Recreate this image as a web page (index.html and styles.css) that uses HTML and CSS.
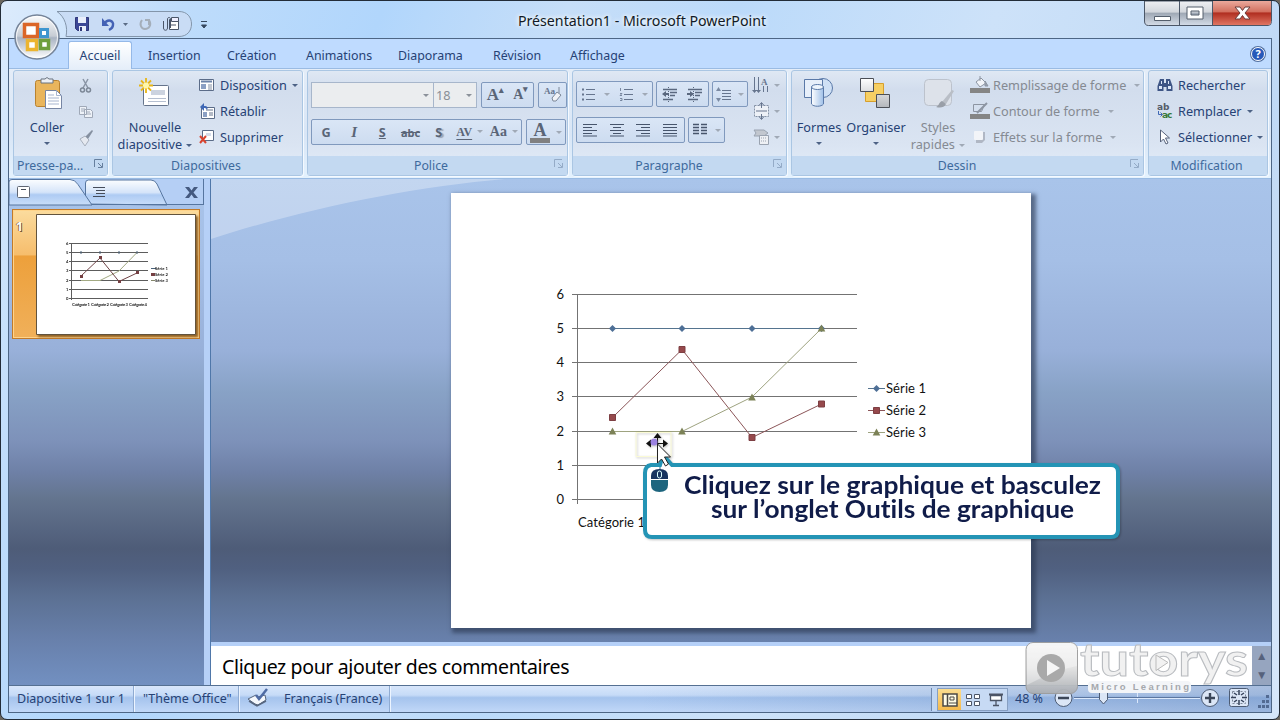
FILE: index.html
```html
<!DOCTYPE html>
<html lang="fr">
<head>
	<meta charset="UTF-8">
	<title>Présentation1 - Microsoft PowerPoint</title>
	<link rel="stylesheet" href="styles.css">
</head>
<body>
	<div class="window">
		<div class="titlebar">
			<div class="quick">
				<svg class="quick-icons" width="160" height="30" viewBox="50 8 160 30">
					<path d="M57 11.500H179C187 11.500 191.500 17 191.500 24S187 36.500 179 36.500H66C68 27 65 17 57 11.500z" fill="#c9dcf5" stroke="#8395aa"/>
					<path d="M75.500 17.500h13v13h-11l-2-2z" fill="#3c4796" stroke="#303879"/><path d="M78 17h8v6h-8zM79 26h7v5h-7z" fill="#e9eefb"/><path d="M80 27h2v4h-2z" fill="#303879"/>
					<path d="M104 24c4-6 10-3 9 1 0 3-2 4-4 5" fill="none" stroke="#4462b5" stroke-width="2.400"/><path d="M102 18v8h7z" fill="#4462b5"/>
					<path d="M123 23h5l-2.500 3z" fill="#5a6b84"/>
					<path d="M142 20c-3 4-1 9 3 9s7-4 4-9M145 20h4v5" fill="none" stroke="#a4aeba" stroke-width="2"/>
					<path d="M169.500 19.500h9v10h-9z" fill="#fff" stroke="#4a5568"/><path d="M171.500 17.500h7v4h-7zM171 25h5" fill="#eef" stroke="#4a5568"/><path d="M163.500 21v7c0 3 4 3 4 0v-9c0-2 3-2 3 0v9" fill="none" stroke="#4a5568"/>
					<path d="M201 21.500h6M201.500 25h5l-2.500 3z" stroke="#35475e" fill="#35475e"/>
				</svg>
			</div>
			<div class="caption">Présentation1 - Microsoft PowerPoint</div>
			<div class="controls">
				<svg width="130" height="26" viewBox="1143 0 130 26">
					<defs>
						<linearGradient id="glass" x2="0" y2="1"><stop offset="0" stop-color="#eef0f3"/><stop offset=".45" stop-color="#d2d6dc"/><stop offset=".5" stop-color="#9fa8b5"/><stop offset="1" stop-color="#d5dde8"/></linearGradient>
						<linearGradient id="red" x2="0" y2="1"><stop offset="0" stop-color="#eba99c"/><stop offset=".45" stop-color="#d2705f"/><stop offset=".5" stop-color="#b02e20"/><stop offset="1" stop-color="#e07562"/></linearGradient>
					</defs>
					<path d="M1144.500 0V20q0 4.500 4 4.500H1268q3.500 0 3.500-4V0z" fill="url(#glass)" stroke="#4b5667"/>
					<path d="M1213 0v24h55q3 0 3-4V0z" fill="url(#red)"/>
					<path d="M1179.500 0v24M1212.500 0v24" stroke="#4b5667"/>
					<path d="M1154.500 15.500h16v4h-16z" fill="#fff" stroke="#545e6c"/>
					<path fill-rule="evenodd" d="M1187 6h16v12h-16zM1191 10v4h8v-4z" fill="#fff" stroke="#545e6c"/>
					<path d="M1235 6h5l2.500 3.500L1245 6h5l-5 6 5 6h-5l-2.500-3.500L1240 18h-5l5-6z" fill="#fff" stroke="#6b3c3b"/>
				</svg>
			</div>
		</div>

		<div class="client">
			<div class="tabs">
				<a class="tab active">Accueil</a>
				<a class="tab t2">Insertion</a>
				<a class="tab t3">Création</a>
				<a class="tab t4">Animations</a>
				<a class="tab t5">Diaporama</a>
				<a class="tab t6">Révision</a>
				<a class="tab t7">Affichage</a>
				<span class="help">?</span>
			</div>

			<div class="ribbon">
				<div class="group g-clip">
					<div class="body">
						<div class="big">
							<svg width="40" height="36" viewBox="0 0 40 36"><rect x="8.500" y="4.500" width="24" height="26" rx="2" fill="#e9b55c" stroke="#b9822f"/><path d="M14 7V3h4q2-3 4 0h4v4z" fill="#eceff4" stroke="#69727f"/><path d="M18.500 14.500h11l5 5v13h-16z" fill="#fff" stroke="#7786a4"/><path d="M29.500 14.500v5h5M21 19h6M21 22h11M21 25h11M21 28h11" fill="none" stroke="#a7b5cf"/></svg>
							<span>Coller</span><i class="arrow"></i>
						</div>
						<div class="smalls icons">
							<svg width="18" height="18" viewBox="0 0 18 18"><path d="M6 2l5 9M11 2L6 11" stroke="#8a95a5" stroke-width="1.500"/><circle cx="5.500" cy="13" r="2" fill="none" stroke="#7d8897" stroke-width="1.500"/><circle cx="11.500" cy="13" r="2" fill="none" stroke="#7d8897" stroke-width="1.500"/></svg>
							<svg width="18" height="18" viewBox="0 0 18 18"><path d="M2.500 3.500h7v8h-7zM7.500 6.500h6l2 2v6h-8z" fill="#eef2f8" stroke="#a0a9b8"/><path d="M4 6h4M4 8h3M9 9h4M9 11h5" stroke="#a0a9b8"/></svg>
							<svg width="18" height="18" viewBox="0 0 18 18"><path d="M15 1l1 1-5 8-3-2z" fill="#8590a0"/><path d="M3 10l5-3 4 4-4 6z" fill="#e5e9f0" stroke="#a7afbc"/></svg>
						</div>
					</div>
					<div class="label"><span>Presse-pa...</span><svg class="launcher" width="10" height="10" viewBox="0 0 10 10"><path d="M.5 8V.5H8M4 4l4 4M8.500 4v4.500H4" fill="none" stroke="#667f9e"/></svg></div>
				</div>

				<div class="group g-slides">
					<div class="body">
						<div class="big">
							<svg width="40" height="36" viewBox="0 0 40 36"><rect x="8.500" y="9.500" width="25" height="20" rx="1" fill="#fff" stroke="#65748c"/><path d="M16 14h14v5H16z" fill="#ccd3df"/><path d="M13 22.500h18M13 25.500h18" stroke="#b5bfd0"/><path d="M11 2v15M4 9.500h14M6 4.500l10 10M16 4.500l-10 10" stroke="#e8b616" stroke-width="1.800"/><circle cx="11" cy="9.500" r="3" fill="#fff7a8"/></svg>
							<span>Nouvelle</span><span>diapositive <i class="arrow"></i></span>
						</div>
						<div class="smalls">
							<div class="cmd"><svg width="16" height="16" viewBox="0 0 16 16"><path d="M.5 2.500h14v11H.5z" fill="#fff" stroke="#5b6c88"/><path d="M2 4.500h11" stroke="#6b82a8" stroke-width="2"/><path d="M2 7h5v5H2z" fill="#8ba0c4"/><path d="M9 8h4M9 10h4M9 12h4" stroke="#8390a5"/></svg>Disposition<i class="arrow"></i></div>
							<div class="cmd"><svg width="16" height="16" viewBox="0 0 16 16"><path d="M2.500 4.500h13v11h-13z" fill="#fff" stroke="#5b6c88"/><path d="M4 9h4v5H4z" fill="#8ba0c4"/><path d="M7 7h7M10 10h4M10 12h4" stroke="#66748c"/><path d="M1 4l4-4v3c4 0 4 2 3 4-1-2-2-2-3-2v3z" fill="#3f68b5"/></svg>Rétablir</div>
							<div class="cmd"><svg width="16" height="16" viewBox="0 0 16 16"><path d="M3.500 1.500h11v10h-11z" fill="#fff" stroke="#5b6c88"/><path d="M7 4h5v3H7z" fill="#d5dcea"/><path d="M1 7l6 7M7 7l-6 7" stroke="#d8432f" stroke-width="2"/></svg>Supprimer</div>
						</div>
					</div>
					<div class="label"><span>Diapositives</span></div>
				</div>

				<div class="group g-font">
					<div class="body rows">
						<div class="row">
							<div class="combo c-font"><i class="arrow"></i></div>
							<div class="combo c-size">18<i class="arrow"></i></div>
							<div class="box w52"><b class="serif">A<sup>▴</sup></b><b class="serif sm">A<sup>▾</sup></b></div>
							<div class="box w28"><svg width="20" height="18" viewBox="0 0 20 18"><text x="1" y="8" class="tiny">Aa</text><path d="M16 1v6M9 12l5-6 4 3-5 6h-3z" fill="#f1f3f7" stroke="#7c8899"/></svg></div>
						</div>
						<div class="row r2">
							<div class="box w211">
								<b>G</b><em>I</em><b><u>S</u></b><b class="strike">abc</b><b class="shadow">S</b><span class="av serif"><u>AV</u><i class="arrow"></i></span><span class="aa serif">Aa<i class="arrow"></i></span>
							</div>
							<div class="box w40"><span class="serif fontcolor">A</span><i class="arrow"></i></div>
						</div>
					</div>
					<div class="label"><span>Police</span><svg class="launcher off" width="10" height="10" viewBox="0 0 10 10"><path d="M.5 8V.5H8M4 4l4 4M8.500 4v4.500H4" fill="none" stroke="#667f9e"/></svg></div>
				</div>

				<div class="group g-para">
					<div class="body">
						<div class="rows">
							<div class="row">
								<div class="box w77">
									<svg width="15" height="15" viewBox="0 0 15 15"><path d="M5 2.500h9M5 7.500h9M5 12.500h9" stroke="#66758e"/><path d="M1 2.500h2M1 7.500h2M1 12.500h2" stroke="#66758e" stroke-width="2"/></svg><i class="arrow"></i>
									<svg width="15" height="15" viewBox="0 0 15 15"><path d="M5 2.500h9M5 7.500h9M5 12.500h9" stroke="#66758e"/><path d="M1.500 1v3M1 6.500h2l-2 2h2M1 11.500h2v2H1" fill="none" stroke="#66758e" stroke-width=".8"/></svg><i class="arrow"></i>
								</div>
								<div class="box w53">
									<svg width="16" height="15" viewBox="0 0 16 15"><path d="M1 2.500h14M8 5.500h7M8 8.500h5M1 12.500h10" stroke="#5a687f" stroke-width="1.500"/><path d="M0 7l4-3v2h3v2H4v2z" fill="#5a687f"/><path d="M6.500 0v15" stroke="#5a687f" stroke-dasharray="1 1"/></svg>
									<svg width="16" height="15" viewBox="0 0 16 15"><path d="M1 2.500h14M8 5.500h7M8 8.500h5M1 12.500h10" stroke="#5a687f" stroke-width="1.500"/><path d="M7 7L3 4v2H0v2h3v2z" fill="#5a687f"/><path d="M6.500 0v15" stroke="#5a687f" stroke-dasharray="1 1"/></svg>
								</div>
								<div class="box w36"><svg width="16" height="15" viewBox="0 0 16 15"><path d="M6 3.500h9M6 6.500h9M6 9.500h9M6 12.500h9" stroke="#66758e"/><path d="M2.500 0L5 4H0zM2.500 15L5 11H0z" fill="#7b8aa2"/></svg><i class="arrow"></i></div>
							</div>
							<div class="row r2">
								<div class="box w109">
									<svg width="15" height="14" viewBox="0 0 15 14"><path d="M0 1.500h14M0 4.500h9M0 7.500h14M0 10.500h9M0 13h14" stroke="#47556c"/></svg>
									<svg width="15" height="14" viewBox="0 0 15 14"><path d="M0 1.500h14M3 4.500h8M0 7.500h14M3 10.500h8M0 13h14" stroke="#47556c"/></svg>
									<svg width="15" height="14" viewBox="0 0 15 14"><path d="M0 1.500h14M5 4.500h9M0 7.500h14M5 10.500h9M0 13h14" stroke="#47556c"/></svg>
									<svg width="15" height="14" viewBox="0 0 15 14"><path d="M0 1.500h14M0 4.500h14M0 7.500h14M0 10.500h14M0 13h14" stroke="#47556c"/></svg>
								</div>
								<div class="box w37"><svg width="15" height="14" viewBox="0 0 15 14"><path d="M0 1.500h6M8 1.500h6M0 4.500h6M8 4.500h6M0 7.500h6M8 7.500h6M0 10.500h6M8 10.500h6" stroke="#47556c" stroke-width="1.300"/></svg><i class="arrow"></i></div>
							</div>
						</div>
						<div class="smalls faded">
							<div class="cmd"><svg width="18" height="18" viewBox="0 0 18 18"><path d="M2.500 1v15M6.500 1v15M11.500 10v6M15.500 10v6" stroke="#66758e"/><path d="M0 14h5l-2.500 3zM4 14h5l-2.500 3z" fill="#66758e"/><text x="9" y="9" class="tiny">A</text></svg><i class="arrow"></i></div>
							<div class="cmd"><svg width="18" height="18" viewBox="0 0 18 18"><path d="M2.500 3.500h14v11h-14z" fill="#edf1f7" stroke="#8592a6" stroke-dasharray="2 1"/><path d="M9.500 1v5M9.500 12v5M7 3.500l2.500-3 2.500 3M7 14.500l2.500 3 2.500-3M4 9h11" stroke="#66758e" fill="none"/></svg><i class="arrow"></i></div>
							<div class="cmd"><svg width="18" height="18" viewBox="0 0 18 18"><path d="M2 2h10l4 3-4 3H2l2-3z" fill="#c2c7cf" stroke="#9aa3b0"/><path d="M7.500 7.500h9v9h-9z" fill="#eef0f4" stroke="#9aa3b0"/><path d="M9 10h6M9 13h6" stroke="#9aa3b0" stroke-dasharray="1 1"/></svg><i class="arrow"></i></div>
						</div>
					</div>
					<div class="label"><span>Paragraphe</span><svg class="launcher off" width="10" height="10" viewBox="0 0 10 10"><path d="M.5 8V.5H8M4 4l4 4M8.500 4v4.500H4" fill="none" stroke="#667f9e"/></svg></div>
				</div>

				<div class="group g-draw">
					<div class="body">
						<div class="big b-shapes">
							<svg width="40" height="36" viewBox="0 0 40 36"><defs><linearGradient id="cyl"><stop offset="0" stop-color="#fff"/><stop offset="1" stop-color="#9fc0e8"/></linearGradient></defs><circle cx="24" cy="12" r="9.500" fill="#cfe0f5" stroke="#5a79a8"/><path d="M5.500 3.500h18v18h-18z" fill="#e7effa" stroke="#5a79a8"/><path d="M12.500 11v17c2 3 10 3 12 0V11z" fill="url(#cyl)" stroke="#5a79a8"/><ellipse cx="18.500" cy="11" rx="6" ry="2.500" fill="#eef5fd" stroke="#5a79a8"/></svg>
							<span>Formes</span><i class="arrow"></i>
						</div>
						<div class="big b-org">
							<svg width="40" height="36" viewBox="0 0 40 36"><defs><linearGradient id="sq" x2="0" y2="1"><stop offset="0" stop-color="#fff"/><stop offset="1" stop-color="#b4b7bc"/></linearGradient></defs><path d="M9.500 7.500h18v18h-18z" fill="#f6cf63" stroke="#d79f2c"/><path d="M4.500 2.500h13v13h-13zM20.500 18.500h13v13h-13z" fill="url(#sq)" stroke="#4b4f57"/></svg>
							<span>Organiser</span><i class="arrow"></i>
						</div>
						<div class="big b-styles off">
							<svg width="40" height="36" viewBox="0 0 40 36"><rect x="6.500" y="3.500" width="27" height="26" rx="4" fill="#dde2ea" stroke="#bcc2cc"/><path d="M34 14l2 1-8 13-4-2z" fill="#b9bec6"/><path d="M24 25l4 3c-2 4-6 4-10 3 3-1 3-5 6-6z" fill="#999fa8"/></svg>
							<span>Styles</span><span>rapides <i class="arrow"></i></span>
						</div>
						<div class="smalls off">
							<div class="cmd"><svg width="20" height="18" viewBox="0 0 20 18"><path d="M6 6l5-4 5 5-6 4z" fill="#f2f4f8" stroke="#8d95a2"/><path d="M15 5l3 5-3 0zM10 0v5" fill="#9aa2af" stroke="#8d95a2"/><path d="M0 12h20v5H0z" fill="#858585"/></svg>Remplissage de forme<i class="arrow"></i></div>
							<div class="cmd"><svg width="20" height="18" viewBox="0 0 20 18"><path d="M3.500 2.500h11l-3 7h-8z" fill="none" stroke="#8d95a2"/><path d="M17 1L9 9l-2 2" stroke="#8d95a2" stroke-width="2"/><path d="M0 12h20v5H0z" fill="#858585"/></svg>Contour de forme<i class="arrow"></i></div>
							<div class="cmd"><svg width="20" height="18" viewBox="0 0 20 18"><path d="M6 6l3-2h6v8l-3 3H6z" fill="#b0b7c4"/><rect x="4" y="3" width="9" height="9" rx="1" fill="#f2f4f8"/></svg>Effets sur la forme<i class="arrow"></i></div>
						</div>
					</div>
					<div class="label"><span>Dessin</span><svg class="launcher off" width="10" height="10" viewBox="0 0 10 10"><path d="M.5 8V.5H8M4 4l4 4M8.500 4v4.500H4" fill="none" stroke="#667f9e"/></svg></div>
				</div>

				<div class="group g-edit">
					<div class="body">
						<div class="smalls">
							<div class="cmd"><svg width="16" height="16" viewBox="0 0 16 16"><path d="M3 2h4v4h2V2h4l2.500 7v5h-6v-4h-3v4h-6V9z" fill="#3e5585"/><path d="M2 9h3v3H2zM11 9h3v3h-3zM4 4h1v3H4zM11 4h1v3h-1z" fill="#dbe6f7"/></svg>Rechercher</div>
							<div class="cmd"><svg width="16" height="16" viewBox="0 0 16 16"><text x="0" y="7" class="ab">ab</text><text x="5" y="15" class="ac">ac</text><path d="M1.500 8v3.500H5M3.500 9.500l2 2-2 2" fill="none" stroke="#3f68b5"/></svg>Remplacer<i class="arrow"></i></div>
							<div class="cmd"><svg width="16" height="16" viewBox="0 0 16 16"><path d="M3.500 1v12l3-3 2.500 5 2-1-2.500-5h4z" fill="#fff" stroke="#56627a"/></svg>Sélectionner<i class="arrow"></i></div>
						</div>
					</div>
					<div class="label"><span>Modification</span></div>
				</div>
			</div>

			<div class="workspace">
				<div class="outline">
					<svg class="pane-tabs" width="195" height="27" viewBox="9 180 195 27">
						<defs><linearGradient id="pt" x2="0" y2="1"><stop offset="0" stop-color="#fbfdff"/><stop offset=".5" stop-color="#d5e4f9"/><stop offset=".6" stop-color="#aecbf3"/><stop offset="1" stop-color="#c9defa"/></linearGradient></defs>
						<path d="M9 180h195v26H9z" fill="#b5cff5"/>
						<path d="M85.500 205V184q0-3 3-3H151q4 0 6 4l10 21z" fill="url(#pt)" stroke="#56759f"/>
						<path d="M9 206V183q0-2.500 3-2.500H70q5 0 8 5l14 20.500z" fill="url(#pt)" stroke="#56759f"/>
						<path d="M92 205.500H204M203.500 180v26" stroke="#56759f"/>
						<rect x="17.500" y="187.500" width="12" height="11" rx="1" fill="#fff" stroke="#5f6673"/><path d="M21 190.500h5M93 188.500h12M96 191.500h9M96 194.500h9M93 197.500h12" stroke="#464d5a"/>
						<path d="M185 188h4l2.500 3.500 2.500-3.500h4l-4.500 5.500 4.500 5.500h-4l-2.500-3.500-2.500 3.500h-4l4.500-5.500z" fill="#455a80"/>
					</svg>
					<div class="thumb">
						<span class="num">1</span>
						<svg width="160" height="121" viewBox="36 214 160 121">
							<path d="M36.500 214.500h159v120h-159z" fill="#fff" stroke="#62533d"/>
							<path d="M69 243.500h79M69 252.500h79M69 261.500h79M69 270.500h79M69 280.500h79M69 289.500h79M69 298.500h79M71.500 243v57" stroke="#5c5c5c"/>
							<path d="M81 280.500h19l19-9.500 18-18.500" fill="none" stroke="#a3aa83"/>
							<path d="M81 276l19-18 19 23.500 19-9" fill="none" stroke="#704447"/>
							<path d="M81 251v3M100 251v3M119 251v3M137 251v3" stroke="#496078"/><path d="M151 268.500h5" stroke="#496078"/><path d="M80 275h3v3h-3zM99 256h3v3h-3zM118 280h3v3h-3zM136 271h3v3h-3zM151 273h4v3h-4z" fill="#743f42"/><path d="M151 280.500h4" stroke="#84866b"/>
							<g class="mini"><text x="66" y="245">6</text><text x="66" y="254">5</text><text x="66" y="263">4</text><text x="66" y="272">3</text><text x="66" y="282">2</text><text x="66" y="291">1</text><text x="66" y="300">0</text><text x="155" y="270">Série 1</text><text x="155" y="276">Série 2</text><text x="155" y="282">Série 3</text><text x="72" y="306" textLength="18">Catégorie 1</text><text x="91" y="306" textLength="18">Catégorie 2</text><text x="110" y="306" textLength="18">Catégorie 3</text><text x="129" y="306" textLength="18">Catégorie 4</text></g>
						</svg>
					</div>
				</div>
				<div class="main">
					<div class="stage">
						<svg class="wave" width="300" height="62" viewBox="211 179 300 62"><path d="M211 179H505C410 187 300 210 211 239z" fill="#fff" opacity=".3"/></svg>
						<div class="slide">
							<svg width="580" height="435" viewBox="451 193 580 435">
								<path d="M572 294.500h285M572 328.500h285M572 362.500h285M572 396.500h285M572 431.500h285M572 465.500h285M572 499.500h285M577.500 294v210" stroke="#737373" shape-rendering="crispEdges"/>
								<path d="M612.500 328.500H821.500" stroke="#55748f"/>
								<path d="M612.500 417.500L682 349.500 752 437.500 821.500 404" fill="none" stroke="#8b5558"/>
								<path d="M612.500 431.500H682L752 397 821.500 328.500" fill="none" stroke="#9ea380"/>
								<path d="M868 388.500h17" stroke="#55748f"/><path d="M868 410.500h17" stroke="#8b5558"/><path d="M868 432.500h17" stroke="#9ea380"/>
								<g fill="#4e6f96"><path id="dia" d="M612.500 325l3.500 3.500-3.500 3.500-3.500-3.500z"/><use href="#dia" x="69.500"/><use href="#dia" x="139.500"/><use href="#dia" x="209"/><use href="#dia" x="264" y="60"/></g>
								<g fill="#96494c" stroke="#7d3f43"><path id="squ" d="M609.500 414.500h6v6h-6z"/><use href="#squ" x="69.500" y="-68"/><use href="#squ" x="139.500" y="20"/><use href="#squ" x="209" y="-13.500"/><use href="#squ" x="264" y="-7"/></g>
								<g fill="#7c8257"><path id="tri" d="M612.500 427.500l3.800 7h-7.600z"/><use href="#tri" x="69.500"/><use href="#tri" x="139.500" y="-34"/><use href="#tri" x="209" y="-103"/><use href="#tri" x="264" y="1"/></g>
								<g class="chart-text">
									<text x="556.500" y="299">6</text><text x="556.500" y="333">5</text><text x="556.500" y="367">4</text><text x="556.500" y="401">3</text><text x="556.500" y="436">2</text><text x="556.500" y="470">1</text><text x="556.500" y="504">0</text>
									<text x="886" y="393" textLength="40">Série 1</text><text x="886" y="415" textLength="40">Série 2</text><text x="886" y="437" textLength="40">Série 3</text>
									<text x="578" y="527" textLength="67">Catégorie 1</text>
								</g>
							</svg>
						</div>
					</div>
					<div class="notes">
						<p>Cliquez pour ajouter des commentaires</p>
						<div class="scroll"><i>▲</i><i>▼</i></div>
					</div>
				</div>
			</div>

			<div class="status">
				<span class="cell s1">Diapositive 1 sur 1</span>
				<span class="cell s2">"Thème Office"</span>
				<span class="cell s3"><svg width="22" height="20" viewBox="0 0 22 20"><path d="M1 11l8-4 2 2 7-2 1 5-8 5-3-1z" fill="#f4f7fc" stroke="#56657e"/><path d="M2 13l8 5 9-5" fill="none" stroke="#56657e" stroke-width="1.500"/><path d="M9 7l3 4 8-10" fill="none" stroke="#4f6ba4" stroke-width="2.500"/></svg></span>
				<span class="cell s4">Français (France)</span>
				<div class="views">
					<span class="on"><svg width="16" height="14" viewBox="0 0 16 14"><path d="M1 1h14v12H1zM5.500 1v12" fill="#fffbe5" stroke="#4c4a45" stroke-width="1.500"/><path d="M8 4h4v3H8zM7 10h8" fill="none" stroke="#4c4a45"/></svg></span>
					<span><svg width="16" height="14" viewBox="0 0 16 14"><path d="M1.500 1.500h5v4h-5zM9.500 1.500h5v4h-5zM1.500 8.500h5v4h-5zM9.500 8.500h5v4h-5z" fill="#fff" stroke="#4c5566"/></svg></span>
					<span><svg width="16" height="14" viewBox="0 0 16 14"><path d="M1 1.500h14" stroke="#4c5566" stroke-width="2"/><path d="M2.500 2.500h11v5h-11zM8 8v4M5 12.500h6" fill="#fff" stroke="#4c5566" stroke-width="1.300"/></svg></span>
				</div>
				<span class="zoom">48 %</span>
				<svg class="slider" width="218" height="24" viewBox="1053 687 218 24">
					<path d="M1074 698.500h126M1137.500 692v11" stroke="#dbe8fb"/><path d="M1074 697.500h126" stroke="#5b76a0"/>
					<g fill="#dbe6f6" stroke="#4d5c74"><circle cx="1063.500" cy="698" r="8.500"/><circle cx="1210" cy="698" r="8.500"/><path d="M1099.500 692.500h8v7l-4 4.500-4-4.500z"/><rect x="1229.500" y="688.500" width="19" height="18" rx="2"/></g>
					<path d="M1058 698h11M1205 698h10M1210 693v10" stroke="#3b4658" stroke-width="2.400"/>
					<path d="M1232.500 691.500h13v12h-13z" fill="none" stroke="#7b8798" stroke-dasharray="2 2"/><path d="M1239 690v5M1239 700v5M1231 697.500h5M1242 697.500h5M1234 693l3 2M1244 693l-3 2M1234 702l3-2M1244 702l-3-2" stroke="#35415a" stroke-width="1.500"/>
					<path d="M1266 695h3v3h-3zM1262 700h3v3h-3zM1266 700h3v3h-3zM1258 705h3v3h-3zM1262 705h3v3h-3zM1266 705h3v3h-3z" fill="#526a92"/>
				</svg>
			</div>
		</div>
	</div>

	<svg class="orb" width="48" height="48" viewBox="0 0 48 48">
		<defs><linearGradient id="og" x2="0" y2="1"><stop offset="0" stop-color="#fdfdfd"/><stop offset=".48" stop-color="#c6ccd4"/><stop offset=".52" stop-color="#a9b3c2"/><stop offset="1" stop-color="#fff"/></linearGradient></defs>
		<circle cx="24" cy="24" r="22" fill="url(#og)" stroke="#76859a" stroke-width="1.500"/><circle cx="24" cy="24" r="20.500" fill="none" stroke="#fff" opacity=".8"/>
		<path d="M11.500 11.500h13v12h-13z" fill="#fff" stroke="#db6527" stroke-width="3.500"/><path d="M27.500 16.500h7v7h-7z" fill="#fff" stroke="#3f96cf" stroke-width="3"/><path d="M14.500 27.500h9v9h-9z" fill="#fff" stroke="#ecb42f" stroke-width="3.500"/><path d="M27.500 27.500h8v8h-8z" fill="#fff" stroke="#6f9f3c" stroke-width="3.500"/>
	</svg>

	<div class="callout">
		<svg width="500" height="112" viewBox="630 430 500 112">
			<path d="M636 432.500h35v24h-35z" fill="none" stroke="#fbfbd6"/>
			<path d="M651 465q-6 1-6 8v57q0 7 7 7h459q7 0 7-7v-58q0-7-7-7H672l-9-10-3 10z" fill="#fff" stroke="#2494b5" stroke-width="4"/>
			<path d="M657.500 434v25M647 443.500h20" stroke="#111"/><path d="M657.500 433l4 5h-8zM646 443.500l5-4v8zM668 443.500l-5-4v8z" fill="#111"/>
			<circle cx="654" cy="442" r="3.500" fill="#9b82e0"/>
			<path d="M657.500 444v19l4-4 4 7 3-2-4-7h6z" fill="#fff" stroke="#222"/>
			<path d="M660 467v5" stroke="#28788f"/>
			<path d="M651 479v-3q0-7 8.500-7t8.500 7v3z" fill="#17335f"/><path d="M651 480h17v5q0 7-8.500 7t-8.500-7z" fill="#1d657e"/><rect x="657.500" y="471" width="4" height="7" rx="2" fill="#17335f" stroke="#dff"/>
			<g class="callout-text"><text x="684" y="494" textLength="417" lengthAdjust="spacingAndGlyphs">Cliquez sur le graphique et basculez</text><text x="711" y="518" textLength="363" lengthAdjust="spacingAndGlyphs">sur l’onglet Outils de graphique</text></g>
		</svg>
	</div>

	<svg class="watermark" width="230" height="56" viewBox="1022 640 230 56">
		<defs><linearGradient id="wm" x2="0" y2="1"><stop offset="0" stop-color="#f4f4f4"/><stop offset=".5" stop-color="#e2e2e2"/><stop offset="1" stop-color="#a9adb2"/></linearGradient></defs>
		<rect x="1026" y="642.500" width="51.500" height="51" rx="7" fill="url(#wm)" stroke="#9c9c9c" opacity=".95"/>
		<path d="M1027 650q0-7 7-7h35q8 0 8 7v16q-22 4-50 19z" fill="#fff" opacity=".35"/>
		<circle cx="1051" cy="668" r="14" fill="#a9a9a9"/><path d="M1047 660l13 8-13 8z" fill="#f5f5f5"/>
		<text x="1080" y="676" class="brand" textLength="168" lengthAdjust="spacingAndGlyphs">tutorys</text>
		<rect x="1088" y="681" width="103" height="12" rx="4" fill="#f3f5f8"/>
		<path d="M1156 655l12 7.500-12 8z" fill="#f2f2f2" stroke="#bbb"/>
		<text x="1091" y="690" class="tag" textLength="98">Micro Learning</text>
	</svg>
</body>
</html>
```
FILE: styles.css
```css
*{ margin: 0; padding: 0; box-sizing: border-box; }
body{ width: 1280px; height: 720px; overflow: hidden; background: #6b665e; font-family: "Noto Sans", sans-serif; font-size: 12.7px; color: #264275; }
svg{ display: block; flex: none; }
i{ font-style: normal; }

.window{ width: 1280px; height: 720px; padding: 0 7px 7px; border: 1px solid #222c38; border-radius: 7px; background: linear-gradient(110deg, #dcebfc 0, #bedcfb 12%, #b1d6fc 25%, #c6def8 37%, #bbdafa 48%, #cde2f9 65%, #c0d9f5 85%, #d6e7fa 100%); overflow: hidden; }

.titlebar{ height: 37px; display: flex; justify-content: space-between; }
.quick{ width: 320px; padding: 7px 0 0 42px; }
.caption{ padding: 10px 0 0 4px; font-size: 14.2px; line-height: 19px; color: #111a26; text-shadow: 0 0 5px #fff, 0 0 5px #fff; }
.controls{ width: 320px; display: flex; justify-content: flex-end; }
.controls svg{ margin-right: -1px; }

.client{ height: 675px; border: 1px solid #4d6685; background: #bfdbff; }
.tabs{ height: 29px; padding: 2px 5px 0 59px; display: flex; font-size: 12.4px; }
.tab{ height: 28px; line-height: 29px; white-space: nowrap; }
.tab.active{ width: 64px; margin-right: 16px; text-align: center; background: linear-gradient(#fff, #e5eef9); border: 1px solid #95b9e8; border-bottom: 0; border-radius: 3px 3px 0 0; line-height: 27px; position: relative; z-index: 2; }
.t2{ width: 79px; }
.t3{ width: 79px; }
.t4{ width: 92px; }
.t5{ width: 95px; }
.t6{ width: 77px; }
.help{ width: 14px; height: 14px; margin: 6px 1px 0 auto; border-radius: 50%; border: 1px solid #fff; box-shadow: 0 0 0 1px #5370a0; background: #2759b9; color: #fff; font-weight: bold; font-size: 11px; line-height: 12px; text-align: center; }

.ribbon{ height: 111px; padding: 1px 2px 0 4px; display: flex; gap: 4px; background: linear-gradient(#e4edf8, #d9e6f6 60%, #e4f2fe); border: solid #9abbe3; border-width: 1px 0; }
.group{ height: 106px; display: flex; flex-direction: column; border: 1px solid #aac6e3; border-radius: 3px; background: linear-gradient(#dfe8f4, #d2dded 18%, #dae4f2 70%, #e3edf9); box-shadow: 1px 1px 0 #f4f9ff; }
.g-clip{ width: 95px; }
.g-slides{ width: 191px; }
.g-font{ width: 261px; }
.g-para{ width: 215px; }
.g-draw{ width: 353px; }
.g-edit{ width: 120px; }
.body{ height: 85px; padding-top: 1px; display: flex; }
.label{ height: 19px; background: #c3d9f1; color: #3e6a9d; display: flex; align-items: center; font-size: 12.3px; line-height: 19px; padding-right: 3px; }
.label span{ flex: 1; text-align: center; }
.g-para .label span, .g-draw .label span{ padding-right: 8px; }
.launcher{ margin-bottom: 4px; }
.launcher.off{ opacity: .5; }

.arrow{ display: inline-block; width: 0; height: 0; border: solid transparent; border-width: 3px 3px 0; border-top-color: #4d6285; flex: none; }
.off{ color: #858a92; }
.off .arrow, .box .arrow, .faded .arrow{ border-top-color: #a0a9b6; }
.combo .arrow{ border-top-color: #8b919a; }

.big{ display: flex; flex-direction: column; align-items: center; line-height: 17px; padding-top: 4px; white-space: nowrap; }
.big svg{ margin-bottom: 7px; }
.big > span{ height: 17px; }
.big > span .arrow{ vertical-align: middle; margin-left: 1px; }
.big > .arrow{ margin-top: 6px; }
.g-clip .big{ width: 66px; }
.g-clip .label span{ text-align: left; padding-left: 3px; }
.g-slides .big{ width: 84px; }
.b-shapes{ width: 54px; }
.b-org{ width: 60px; }
.b-styles{ width: 64px; }

.smalls{ display: flex; flex-direction: column; }
.cmd{ height: 26px; display: flex; align-items: center; gap: 5px; white-space: nowrap; }
.smalls.icons{ gap: 8px; padding-top: 5px; margin-left: -3px; }
.g-slides .smalls{ padding-left: 2px; }
.g-edit .smalls{ padding-left: 8px; }
.g-draw .cmd{ gap: 3px; }
.g-draw .cmd .arrow{ margin-left: 5px; }
.g-para .smalls{ padding-left: 4px; }
.g-para .cmd{ gap: 4px; }

.rows{ display: block; padding-left: 3px; }
.body.rows{ padding-top: 0; }
.row{ display: flex; padding-top: 11px; gap: 4px; height: 37px; }
.g-para .row{ padding-top: 9px; height: 35px; gap: 3px; }
.g-para .r2{ height: 36px; padding-top: 10px; }
.box{ height: 26px; display: flex; align-items: center; justify-content: space-around; border: 1px solid #8099bd; border-radius: 2px; background: linear-gradient(#dae6f6, #cddcf0); color: #5a6577; }
.combo{ height: 26px; border: 1px solid #a7b6cb; background: #ebedef; display: flex; justify-content: space-between; align-items: center; padding: 0 4px 0 2px; color: #8a8f97; }
.c-font{ width: 123px; justify-content: flex-end; }
.c-size{ width: 44px; margin-left: -5px; }
.w28{ width: 29px; }
.w36{ width: 36px; }
.w37{ width: 37px; }
.w40{ width: 40px; }
.w52{ width: 53px; }
.w53{ width: 53px; }
.w77{ width: 77px; }
.w109{ width: 109px; }
.w211{ width: 211px; }
.w211 > b, .w211 > em{ width: 28px; flex: none; text-align: center; }
.w211 > span{ width: 34px; text-align: center; white-space: nowrap; }
.serif{ font-family: "Liberation Serif", serif; font-weight: bold; }
.box b.serif{ font-size: 17px; }
.box b.sm{ font-size: 14px; }
.box sup{ font-size: 9px; line-height: 0; vertical-align: 7px; }
.box em{ font-family: "Liberation Serif", serif; font-size: 15px; font-weight: bold; }
.strike{ text-decoration: line-through; font-size: 11px; }
.shadow{ text-shadow: 2px 1px 1px #98a3b5; }
.av{ font-size: 12px; }
.av u{ text-underline-offset: 3px; }
.av .arrow, .aa .arrow{ margin: 0 0 3px 5px; }
.aa{ font-size: 14px; }
.fontcolor{ width: 20px; height: 22px; line-height: 18px; text-align: center; font-size: 18px; border-bottom: 5px solid #808080; }
.tiny{ font: bold 9px "Liberation Serif", serif; fill: #66758e; }
.ab{ font: bold 9px "DejaVu Sans", sans-serif; fill: #555d6a; }
.ac{ font: bold 9px "DejaVu Sans", sans-serif; fill: #397a3b; letter-spacing: -1px; }

.workspace{ height: 506px; display: flex; background: linear-gradient(#a9c4ea 0, #a5bfe6 16%, #98b0d9 34%, #88a2c6 42%, #7d91b9 52%, #6e80a6 58%, #64758f 63%, #4e5c78 73%, #506080 77%, #5c7194 83%, #6880ab 91%, #7290c1 100%); }
.outline{ width: 201px; border-right: 6px solid #b6d0f7; }
.thumb{ width: 188px; height: 130px; margin: 3px 0 0 3px; padding-top: 4px; display: flex; border: 1px solid #c17a2a; background: linear-gradient(#fbdc9e, #f6bd6c 35%, #eda03b 36%, #f0b05a); box-shadow: inset 0 0 0 1px #ffd48a; }
.num{ width: 23px; padding-left: 3px; line-height: 25px; color: #fff; font-weight: bold; font-size: 12px; text-shadow: 1px 1px 0 #6e5530, -1px 0 0 #93723e; }
.thumb svg{ filter: drop-shadow(2px 2px 1px #8d6128); }
.mini{ font: bold 4.2px "Lato", sans-serif; fill: #222; }
.main{ flex: 1; border-left: 1px solid #4f77a9; }
.stage{ height: 463px; padding: 14px 0 0 240px; position: relative; }
.wave{ position: absolute; left: 0; top: 0; }
.slide{ position: relative; width: 580px; height: 435px; background: #fff; box-shadow: 3px 3px 4px 2px rgba(45,58,85,.65); }
.chart-text{ font: 13px "Lato", sans-serif; fill: #111; }
.notes{ height: 43px; border-top: 4px solid #b5d0f8; background: #fff; display: flex; justify-content: space-between; color: #000; font-size: 19.500px; line-height: 41px; letter-spacing: -.36px; padding-left: 11px; }
.scroll{ width: 19px; background: #96a5bf; font-size: 12px; color: #56627c; line-height: 19px; text-align: center; display: flex; flex-direction: column; }

.status{ height: 27px; border-top: 1px solid #557092; background: linear-gradient(90deg, transparent 50%, rgba(80,115,170,.35)), linear-gradient(#d8e6fb, #c6dbf7 35%, #a5c3ed 45%, #c1d8f8); display: flex; font-size: 12.5px; line-height: 26px; }
.cell{ border-right: 1px solid #8fabd2; box-shadow: 1px 0 0 #ecf4ff; white-space: nowrap; }
.s1{ width: 125px; padding-left: 8px; }
.s2{ width: 105px; padding-left: 9px; }
.s3{ width: 37px; padding: 2px 0 0 8px; border: 0; box-shadow: none; }
.s4{ width: 114px; padding-left: 8px; }
.views{ height: 23px; margin: 2px 0 0 auto; display: flex; border: 1px solid #879fc2; background: #c7daf4; box-shadow: -5px 0 0 #c0d6f3, -6px 0 0 #7089ad; }
.views span{ width: 23px; display: flex; align-items: center; justify-content: center; }
.views .on{ background: linear-gradient(#fbdd90, #f5b94b); }
.zoom{ width: 45px; padding-left: 7px; white-space: nowrap; }
.slider{ margin-top: 1px; }

/* items floating over the window */
.orb{ position: absolute; left: 13px; top: 13px; }
.callout{ position: absolute; left: 630px; top: 430px; }
.callout svg{ filter: drop-shadow(1px 1px 1px rgba(0,0,0,.25)); }
.callout-text{ font: 700 24px "Lato", sans-serif; font-variant-ligatures: none; fill: #101c49; }
.watermark{ position: absolute; left: 1022px; top: 640px; overflow: visible; }
.brand{ font: bold 46px "Lato", sans-serif; fill: #f1f1f1; stroke: #b9bcc0; stroke-width: 1; }
.tag{ font: bold 9.5px "Liberation Sans", sans-serif; fill: #a5a8ad; }
```
